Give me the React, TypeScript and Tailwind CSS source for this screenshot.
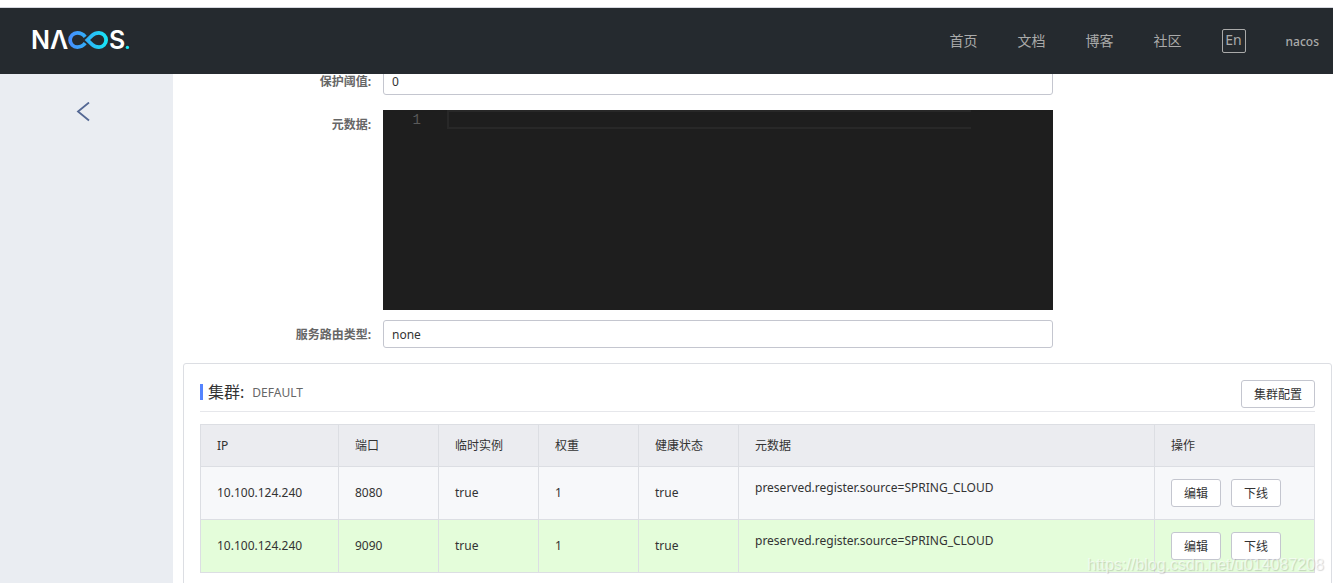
import { useState } from "react";

const NAV = ["首页", "文档", "博客", "社区"];

const COLUMNS = [
  { title: "IP", width: "w-[138px]" },
  { title: "端口", width: "w-[100px]" },
  { title: "临时实例", width: "w-[100px]" },
  { title: "权重", width: "w-[100px]" },
  { title: "健康状态", width: "w-[100px]" },
  { title: "元数据", width: "" },
  { title: "操作", width: "w-[160px]" },
];

type Instance = {
  ip: string;
  port: number;
  ephemeral: boolean;
  weight: number;
  healthy: boolean;
  metadata: string;
};

const INSTANCES: Instance[] = [
  {
    ip: "10.100.124.240",
    port: 8080,
    ephemeral: true,
    weight: 1,
    healthy: true,
    metadata: "preserved.register.source=SPRING_CLOUD",
  },
  {
    ip: "10.100.124.240",
    port: 9090,
    ephemeral: true,
    weight: 1,
    healthy: true,
    metadata: "preserved.register.source=SPRING_CLOUD",
  },
];

const BTN =
  "h-7 rounded-[3px] border border-[#c4c6cf] bg-white px-3 pt-0.5 text-xs text-[#333] hover:bg-[#f2f3f7]";
const FIELD =
  "h-7 w-7/12 appearance-none rounded-[3px] border border-[#c4c6cf] bg-white px-2 pt-px text-xs text-[#333] outline-none";
const LABEL = "w-[200px] shrink-0 pr-3 pt-px text-right text-xs font-bold leading-7 text-[#666]";

function Logo() {
  return (
    <svg width="104" height="34" viewBox="-4 -4 104 34" role="img" aria-label="NACOS">
      <defs>
        <linearGradient id="loop" gradientUnits="userSpaceOnUse" x1="36" y1="0" x2="76" y2="0">
          <stop offset="0" stopColor="#498cff" />
          <stop offset="0.5" stopColor="#2fb2f8" />
          <stop offset="1" stopColor="#16e8f5" />
        </linearGradient>
      </defs>
      <g fill="#fff" fontFamily="Inter, sans-serif" fontSize="25" fontWeight="600">
        <text x="-1" y="21">N</text>
        <text x="18" y="21">Λ</text>
        <text x="77" y="21">S</text>
      </g>
      <g fill="none" stroke="url(#loop)" strokeWidth="3.8">
        <path d="M53.2 8.8C51 6 48.6 4.9 45.2 4.9a7.1 7.1 0 0 0 0 14.2c3.4 0 5.8-1.1 8-3.9" />
        <path d="M55.4 12L60.2 7.4C62.2 5.5 64.4 4.9 67 4.9a7.1 7.1 0 0 1 0 14.2c-2.6 0-4.8-.6-6.8-2.5Z" />
      </g>
      <circle cx="95.4" cy="19.4" r="1.7" fill="#16e8f5" />
    </svg>
  );
}

function Header() {
  return (
    <header className="relative z-10 flex h-[67px] shrink-0 items-center justify-between border-t border-[#d5d7de] bg-[#252a2f] pl-7 pr-[14px] text-[#aaa]">
      <a href="#" className="block">
        <Logo />
      </a>
      <nav className="flex items-center gap-10 text-sm">
        {NAV.map((n) => (
          <a key={n} href="#" className="hover:text-white">
            {n}
          </a>
        ))}
        <button className="flex size-6 items-center justify-center rounded-xs border border-[#aaa] pb-0.5 text-sm leading-5 hover:text-white">
          En
        </button>
        <a href="#" className="pt-0.5 text-xs font-medium hover:text-white">
          nacos
        </a>
      </nav>
    </header>
  );
}

function MetadataEditor() {
  const [code, setCode] = useState("");
  return (
    <div className="flex h-[200px] w-7/12 bg-[#1e1e1e] font-['Liberation_Mono',monospace] text-sm leading-[19px]">
      <span className="w-[38px] shrink-0 pt-px text-right text-[#5a5a5a]">1</span>
      <textarea
        id="metadata"
        value={code}
        onChange={(e) => setCode(e.target.value)}
        rows={1}
        className="ml-[26px] mr-[82px] h-[19px] min-w-0 flex-1 resize-none overflow-hidden border-2 border-r-0 border-[#282828] leading-[15px] text-[#d4d4d4] outline-none"
      />
    </div>
  );
}

function InstanceTable() {
  return (
    <table className="mt-3 w-full table-fixed border-collapse text-left text-xs">
      <thead className="bg-[#ebecf0]">
        <tr className="h-[42px]">
          {COLUMNS.map((c) => (
            <th key={c.title} className={`border border-[#dcdee3] px-4 font-normal ${c.width}`}>
              {c.title}
            </th>
          ))}
        </tr>
      </thead>
      <tbody>
        {INSTANCES.map((i) => (
          <tr
            key={i.port}
            className="h-[53px] bg-[#f7f8fa] last:bg-[#e4fdda] [&>td]:border [&>td]:border-[#dcdee3] [&>td]:px-4"
          >
            <td>{i.ip}</td>
            <td>{i.port}</td>
            <td>{String(i.ephemeral)}</td>
            <td>{i.weight}</td>
            <td>{String(i.healthy)}</td>
            <td>
              <p className="mb-2.5">{i.metadata}</p>
            </td>
            <td>
              <div className="flex gap-2.5">
                <button className={BTN}>编辑</button>
                <button className={BTN}>下线</button>
              </div>
            </td>
          </tr>
        ))}
      </tbody>
    </table>
  );
}

export default function App() {
  return (
    <div className="flex h-screen flex-col overflow-hidden bg-white pt-[7px] font-['Noto_Sans','Noto_Sans_CJK_SC',sans-serif] text-[#333]">
      <Header />
      <div className="flex min-h-0 flex-1">
        <aside className="w-[173px] shrink-0 bg-[#eaedf2] pt-7">
          <button aria-label="返回" className="ml-[76px] block text-[#546894]">
            <svg width="15" height="20" viewBox="0 0 15 20" fill="none" stroke="currentColor" strokeWidth="1.8">
              <path d="M13 .5L2 9.5l11 9" />
            </svg>
          </button>
        </aside>

        <main className="min-w-0 flex-1 overflow-hidden pl-2.5 pr-px">
          {/* first row sits partly under the header, as when scrolled */}
          <form className="-mt-[7px]">
            <div className="flex h-7">
              <label htmlFor="threshold" className={LABEL}>
                保护阈值:
              </label>
              <input id="threshold" defaultValue="0" className={FIELD} />
            </div>
            <div className="mt-[15px] flex">
              <label htmlFor="metadata" className={LABEL}>
                元数据:
              </label>
              <MetadataEditor />
            </div>
            <div className="mt-2.5 flex h-7">
              <label htmlFor="selector" className={LABEL}>
                服务路由类型:
              </label>
              <select id="selector" className={FIELD}>
                <option>none</option>
              </select>
            </div>
          </form>

          <section className="mt-[15px] rounded-[3px] border border-[#dcdee3] p-4">
            <div className="flex items-start justify-between border-b border-[#e6e7eb] pb-[3px]">
              <h2 className="mt-1 flex items-center border-l-[3px] border-[#5584ff] pl-[5px] text-base leading-4">
                集群:
                <span className="ml-2 pt-0.5 text-xs leading-[14px] text-[#666]">DEFAULT</span>
              </h2>
              <button className={BTN}>集群配置</button>
            </div>
            <InstanceTable />
          </section>
        </main>
      </div>
      <span className="pointer-events-none absolute bottom-2 right-[9px] font-['Liberation_Sans',sans-serif] text-base leading-5 text-white/60 [text-shadow:1px_1px_1px_rgba(0,0,0,0.16)]">
        https://blog.csdn.net/u014087208
      </span>
    </div>
  );
}
